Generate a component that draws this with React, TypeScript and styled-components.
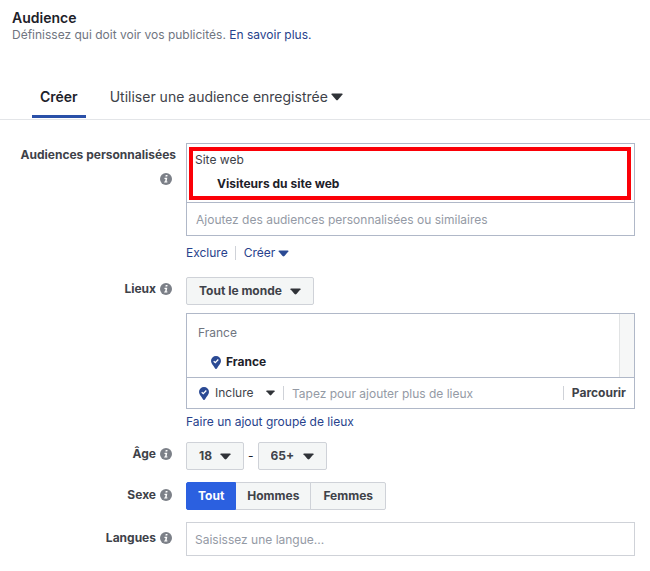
import React, { useState } from 'react';
import styled, { createGlobalStyle } from 'styled-components';

const color = {
  text: '#1d2129',
  strong: '#3e4249',
  muted: '#70757f',
  placeholder: '#949aa5',
  link: '#27428c',
  accent: '#2b60e0',
  frame: '#b0b8c8',
  line: '#cfd2d8',
  surface: '#f4f6f6',
};

const GlobalStyle = createGlobalStyle`
  * { box-sizing: border-box; }
  body { margin: 0; background: #fff; }
  body, button, input, select {
    font-family: Inter, "Liberation Sans", sans-serif;
    font-size: 12px;
    line-height: 18px;
    color: ${color.text};
  }
  button { cursor: pointer; }
`;

const Header = styled.header`
  padding: 10px 12px 0;
`;

const Title = styled.h1`
  margin: 0;
  font-size: 14px;
  line-height: 16px;
  font-weight: 600;
`;

const Intro = styled.p`
  margin: 0;
  color: ${color.muted};
`;

const Link = styled.a`
  color: ${color.link};
  text-decoration: none;
`;

const Tabs = styled.div`
  display: flex;
  gap: 16px;
  margin-top: 31px;
  padding: 0 32px;
  border-bottom: 1px solid #e3e5e8;
`;

const Tab = styled.button<{ $active?: boolean }>`
  display: flex;
  align-items: center;
  gap: 3px;
  height: 43px;
  margin-bottom: 1px;
  padding: 3px 8px 0;
  border: 0;
  border-bottom: 3px solid ${p => (p.$active ? '#2a50a8' : 'transparent')};
  background: none;
  font-size: 14px;
  font-weight: ${p => (p.$active ? 600 : 400)};
  color: ${p => (p.$active ? color.text : color.strong)};
`;

const Form = styled.form`
  display: grid;
  gap: 12px;
  padding: 23px 15px 15px 0;
`;

const Row = styled.div`
  display: grid;
  grid-template-columns: 176px minmax(0, 1fr);
  column-gap: 10px;
`;

const LabelCell = styled.div<{ $top?: number }>`
  display: flex;
  flex-wrap: wrap;
  justify-content: flex-end;
  align-content: flex-start;
  align-items: center;
  column-gap: 4px;
  row-gap: 9px;
  padding-left: 12px;
  padding-top: ${p => p.$top ?? 3}px;
`;

const Label = styled.label`
  font-weight: 700;
  color: ${color.strong};
  white-space: nowrap;
`;

const InfoSlot = styled.span`
  display: flex;
  padding-right: 4px;
`;

const Panel = styled.div`
  border: 1px solid ${color.frame};
`;

const Highlight = styled.div`
  display: grid;
  gap: 6px;
  margin: 3px 3px 2px 2px;
  padding: 0 2px 3px;
  border: 4px solid #fb0007;
`;

const Source = styled.span`
  color: ${color.strong};
`;

const AudienceName = styled.strong`
  padding-left: 22px;
  font-weight: 700;
`;

const PlainInput = styled.input`
  display: block;
  width: 100%;
  min-width: 0;
  padding: 0 9px;
  height: 32px;
  border: 0;
  background: none;
  &::placeholder { color: ${color.placeholder}; opacity: 1; }
`;

const PanelInput = styled(PlainInput)`
  border-top: 1px solid ${color.frame};
  height: 33px;
`;

const PlaceInput = styled(PlainInput)`
  height: 30px;
  padding: 0;
`;

const FramedInput = styled(PlainInput)`
  height: 34px;
  padding: 0 8px;
  border: 1px solid ${color.line};
`;

const Actions = styled.div`
  display: flex;
  align-items: center;
  padding: 8px 0 3px;
`;

const TextButton = styled.button`
  display: flex;
  align-items: center;
  gap: 3px;
  padding: 0;
  border: 0;
  background: none;
  color: ${color.link};
`;

const Divider = styled.span`
  flex: none;
  width: 1px;
  height: 14px;
  margin: 0 8px 0 7px;
  background: ${color.line};
`;

const PickerFrame = styled.span<{ $plain?: boolean }>`
  display: inline-grid;
  align-items: center;
  height: 28px;
  border: 1px solid ${p => (p.$plain ? 'transparent' : color.line)};
  border-radius: 2px;
  background: ${p => (p.$plain ? 'none' : color.surface)};
  > * { grid-area: 1 / 1; }
  > svg {
    justify-self: end;
    margin-right: ${p => (p.$plain ? 0 : 12)}px;
    pointer-events: none;
  }
`;

const PickerSelect = styled.select<{ $plain?: boolean }>`
  appearance: none;
  height: 26px;
  padding: ${p => (p.$plain ? '0 21px 0 0' : '0 31px 0 12px')};
  border: 0;
  background: none;
  font-weight: ${p => (p.$plain ? 400 : 700)};
  color: ${color.strong};
`;

const PlacesList = styled.div`
  display: grid;
  grid-template-columns: minmax(0, 1fr) 15px;
`;

const Places = styled.div`
  display: grid;
  gap: 11px;
  padding: 10px 11px 6px;
  color: ${color.muted};
`;

const Place = styled.strong`
  display: flex;
  align-items: center;
  gap: 5px;
  padding-left: 13px;
  font-weight: 700;
  color: ${color.text};
`;

const ScrollTrack = styled.div`
  border-left: 1px solid #e1e3e4;
  background: #f6f7f7;
`;

const PlaceEntry = styled.div`
  display: flex;
  align-items: center;
  height: 31px;
  padding: 0 8px 0 12px;
  border-top: 1px solid ${color.frame};
`;

const BrowseButton = styled(TextButton)`
  font-weight: 700;
  color: ${color.strong};
`;

const BulkLink = styled(Link)`
  display: block;
  padding-top: 5px;
  line-height: 16px;
`;

const Inline = styled.div`
  display: flex;
  align-items: center;
  gap: 4px;
`;

const IncludeMode = styled(Inline)`
  gap: 5px;
`;

const Stack = styled.div`
  display: grid;
  justify-items: start;
  gap: 8px;
  > :nth-child(2) { justify-self: stretch; }
`;

const Segments = styled.div`
  display: flex;
`;

const Segment = styled.button<{ $active: boolean }>`
  height: 28px;
  padding: 0 11px;
  border: 1px solid ${p => (p.$active ? color.accent : color.line)};
  background: ${p => (p.$active ? color.accent : color.surface)};
  color: ${p => (p.$active ? '#fff' : color.strong)};
  font-weight: 700;
  & + & { border-left-width: ${p => (p.$active ? 1 : 0)}px; }
  & + & + & { border-left-width: 1px; margin-left: -1px; }
  &:first-child { border-radius: 2px 0 0 2px; }
  &:last-child { border-radius: 0 2px 2px 0; padding: 0 12px; }
`;

interface CaretProps {
  fill?: string;
  width?: number;
}

function Caret({ fill = '#303338', width = 11 }: CaretProps) {
  return (
    <svg width={width} height={Math.round(width * 0.66)} viewBox="0 0 12 8" preserveAspectRatio="none" aria-hidden="true">
      <path d="M1.2 .5h9.6q1.1 0 .7 1L7 6.8q-1 1-2 0L.5 1.5q-.4-1 .7-1Z" fill={fill} />
    </svg>
  );
}

function Info() {
  return (
    <InfoSlot>
      <svg width="12" height="12" viewBox="0 0 12 12" role="img" aria-label="Informations">
        <circle cx="6" cy="6" r="6" fill="#7c8088" />
        <path d="M5.7 2h1.900l-.3 1.600H5.400ZM4.600 4.700h2.700l-.7 3.700h.9l-.2 1.200H4.100l.2-1.200h.8L5.500 5.900h-1.100Z" fill="#fff" />
      </svg>
    </InfoSlot>
  );
}

function Pin() {
  return (
    <svg width="10" height="13" viewBox="0 0 10 13" aria-hidden="true">
      <path d="M5 0a5 5 0 0 1 5 5c0 2.600-2.400 4.300-3.600 6.800Q5 14.200 3.600 11.800C2.400 9.300 0 7.600 0 5a5 5 0 0 1 5-5Z" fill="#2b4a94" />
      <path d="m2.700 5.200 1.600 1.500 3-3.200" fill="none" stroke="#fff" strokeWidth="1.300" />
    </svg>
  );
}

interface PickerProps {
  id?: string;
  label?: string;
  value: string;
  plain?: boolean;
}

function Picker({ id, label, value, plain }: PickerProps) {
  return (
    <PickerFrame $plain={plain}>
      <PickerSelect id={id} aria-label={label} $plain={plain} defaultValue={value}>
        <option>{value}</option>
      </PickerSelect>
      <Caret width={plain ? 9 : 11} />
    </PickerFrame>
  );
}

const genders = ['Tout', 'Hommes', 'Femmes'];

export default function App() {
  const [gender, setGender] = useState('Tout');

  return (
    <main>
      <GlobalStyle />
      <Header>
        <Title>Audience</Title>
        <Intro>
          Définissez qui doit voir vos publicités. <Link href="#aide">En savoir plus.</Link>
        </Intro>
      </Header>

      <Tabs role="tablist">
        <Tab type="button" role="tab" aria-selected="true" $active>Créer</Tab>
        <Tab type="button" role="tab" aria-selected="false">
          Utiliser une audience enregistrée
          <Caret width={12} />
        </Tab>
      </Tabs>

      <Form onSubmit={e => e.preventDefault()}>
        <Row>
          <LabelCell>
            <Label htmlFor="audiences">Audiences personnalisées</Label>
            <Info />
          </LabelCell>
          <div>
            <Panel>
              <Highlight>
                <Source>Site web</Source>
                <AudienceName>Visiteurs du site web</AudienceName>
              </Highlight>
              <PanelInput id="audiences" placeholder="Ajoutez des audiences personnalisées ou similaires" />
            </Panel>
            <Actions>
              <TextButton type="button">Exclure</TextButton>
              <Divider />
              <TextButton type="button" aria-haspopup="menu">
                Créer
                <Caret fill="#2b4a94" />
              </TextButton>
            </Actions>
          </div>
        </Row>

        <Row>
          <LabelCell>
            <Label htmlFor="lieux">Lieux</Label>
            <Info />
          </LabelCell>
          <div>
            <Stack>
              <Picker id="lieux" value="Tout le monde" />
              <Panel>
                <PlacesList>
                  <Places>
                    <span>France</span>
                    <Place><Pin />France</Place>
                  </Places>
                  <ScrollTrack />
                </PlacesList>
                <PlaceEntry>
                  <IncludeMode>
                    <Pin />
                    <Picker label="Mode de ciblage" value="Inclure" plain />
                  </IncludeMode>
                  <Divider />
                  <PlaceInput aria-label="Ajouter des lieux" placeholder="Tapez pour ajouter plus de lieux" />
                  <Divider />
                  <BrowseButton type="button">Parcourir</BrowseButton>
                </PlaceEntry>
              </Panel>
            </Stack>
            <BulkLink href="#lieux-groupes">Faire un ajout groupé de lieux</BulkLink>
          </div>
        </Row>

        <Row>
          <LabelCell>
            <Label htmlFor="age-min">Âge</Label>
            <Info />
          </LabelCell>
          <Inline>
            <Picker id="age-min" value="18" />
            -
            <Picker label="Âge maximum" value="65+" />
          </Inline>
        </Row>

        <Row>
          <LabelCell $top={4}>
            <Label as="span" id="sexe">Sexe</Label>
            <Info />
          </LabelCell>
          <Segments role="group" aria-labelledby="sexe">
            {genders.map(name => (
              <Segment
                key={name}
                type="button"
                $active={name === gender}
                aria-pressed={name === gender}
                onClick={() => setGender(name)}
              >
                {name}
              </Segment>
            ))}
          </Segments>
        </Row>

        <Row>
          <LabelCell $top={7}>
            <Label htmlFor="langues">Langues</Label>
            <Info />
          </LabelCell>
          <FramedInput id="langues" placeholder="Saisissez une langue..." />
        </Row>
      </Form>
    </main>
  );
}
